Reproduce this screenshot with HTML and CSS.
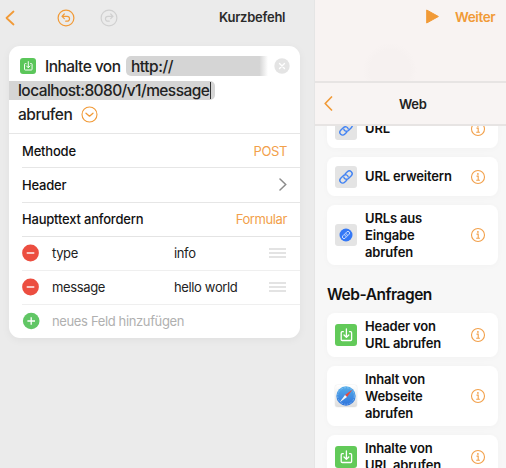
FILE: index.html
```html
<!DOCTYPE html>
<html lang="de">
<head>
<meta charset="utf-8">
<title>Kurzbefehl</title>
<link rel="stylesheet" href="styles.css">
</head>
<body>
<svg class="defs" width="0" height="0" aria-hidden="true">
  <defs>
    <symbol id="download" viewBox="0 0 22 22">
      <path d="M8.300 7.700H7.200a1 1 0 0 0-1 1v6.800a1 1 0 0 0 1 1h8.400a1 1 0 0 0 1-1V8.700a1 1 0 0 0-1-1h-1.100M11.400 5v8M9 11l2.400 2.400 2.400-2.400" fill="none" stroke="currentColor" stroke-width="1.300" stroke-linecap="round" stroke-linejoin="round"/>
    </symbol>
    <symbol id="link" viewBox="0 0 22 22">
      <g transform="rotate(-45 11 11)" fill="none" stroke="currentColor" stroke-width="1.400" stroke-linecap="round">
        <path d="M9.200 13.800H6.300a2.800 2.800 0 0 1 0-5.600h4a2.800 2.800 0 0 1 2.300 4.300"/>
        <path d="M12.800 8.200h2.900a2.800 2.800 0 0 1 0 5.600h-4a2.800 2.800 0 0 1-2.300-4.300"/>
      </g>
    </symbol>
    <symbol id="info" viewBox="0 0 16 16">
      <circle cx="8" cy="8" r="6.500" fill="none" stroke="currentColor" stroke-width="1.100"/>
      <circle cx="7.900" cy="4.900" r=".9" fill="currentColor"/>
      <path d="M6.500 7.100h1.700v4M6.200 11.300h3.700" fill="none" stroke="currentColor" stroke-width="1.100"/>
    </symbol>
    <symbol id="undo" viewBox="0 0 18 18">
      <circle cx="9" cy="9" r="7.900" fill="none" stroke="currentColor" stroke-width="1.200"/>
      <path d="M7.300 5L5 7.300l2.300 2.300M5.200 7.300h4.900a2.400 2.400 0 0 1 0 4.900H8.700" fill="none" stroke="currentColor" stroke-width="1.200" stroke-linecap="round" stroke-linejoin="round"/>
    </symbol>
    <symbol id="grip" viewBox="0 0 17 10">
      <path d="M0 1h17M0 5h17M0 9h17" stroke="currentColor" stroke-width="1.200"/>
    </symbol>
  </defs>
</svg>
<div class="app">
  <main class="editor">
    <header class="toolbar">
      <svg class="back" width="10" height="16" viewBox="0 0 10 16"><path d="M8.500 1.500L1.500 8l7 6.500" fill="none" stroke="currentColor" stroke-width="1.800" stroke-linecap="round" stroke-linejoin="round"/></svg>
      <svg class="undo" width="18" height="18"><use href="#undo"/></svg>
      <svg class="redo" width="18" height="18"><use href="#undo"/></svg>
      <h1>Kurzbefehl</h1>
    </header>
    <section class="action">
      <div class="sentence">
        <div class="line first">
          <svg class="mini" width="16" height="16"><use href="#download"/></svg>
          <span class="verb">Inhalte von</span>
          <span class="chip-start"><span>http://</span></span>
          <svg class="clear" width="16" height="16" viewBox="0 0 16 16"><circle cx="8" cy="8" r="7.700" fill="#e4e4e4"/><path d="M5.500 5.500l5 5M10.500 5.500l-5 5" stroke="#fff" stroke-width="1.400" stroke-linecap="round"/></svg>
        </div>
        <div class="line second"><span class="chip-end"><span class="host">localhost:8080/v1/message</span><i></i></span></div>
        <div class="line third"><span class="fetch">abrufen</span>
          <svg width="17" height="17" viewBox="0 0 17 17"><circle cx="8.500" cy="8.500" r="7.500" fill="none" stroke="currentColor" stroke-width="1.100"/><path d="M5 7.200l3.500 3 3.500-3" fill="none" stroke="currentColor" stroke-width="1.300" stroke-linecap="round" stroke-linejoin="round"/></svg>
        </div>
      </div>
      <div class="row"><span>Methode</span><em>POST</em></div>
      <div class="row"><span>Header</span><svg class="next" width="8" height="13" viewBox="0 0 8 13"><path d="M1 1l5.700 5.500L1 12" fill="none" stroke="currentColor" stroke-width="1.500" stroke-linecap="round"/></svg></div>
      <div class="row"><span>Haupttext anfordern</span><em>Formular</em></div>
      <div class="field">
        <svg width="18" height="18" viewBox="0 0 18 18"><circle cx="8.500" cy="9" r="8.400" fill="#ec4e40"/><path d="M4.700 9h7.600" stroke="#fff" stroke-width="1.400"/></svg>
        <span class="key">type</span><span class="value">info</span><svg class="grip" width="17" height="10"><use href="#grip"/></svg>
      </div>
      <div class="field">
        <svg width="18" height="18" viewBox="0 0 18 18"><circle cx="8.500" cy="9" r="8.400" fill="#ec4e40"/><path d="M4.700 9h7.600" stroke="#fff" stroke-width="1.400"/></svg>
        <span class="key">message</span><span class="value">hello world</span><svg class="grip" width="17" height="10"><use href="#grip"/></svg>
      </div>
      <div class="field add">
        <svg width="18" height="18" viewBox="0 0 18 18"><circle cx="9.200" cy="9" r="8.300" fill="#61c665"/><path d="M5.400 9H13M9.200 5.200v7.600" stroke="#fff" stroke-width="1.300"/></svg>
        <span class="new">neues Feld hinzufügen</span>
      </div>
    </section>
  </main>
  <aside class="library">
    <header class="top">
      <svg width="13" height="15" viewBox="0 0 13 15"><path d="M.7 1v13L12.400 7.500z" fill="currentColor" stroke="currentColor" stroke-linejoin="round"/></svg>
      <span class="weiter">Weiter</span>
    </header>
    <nav class="crumb">
      <svg width="9" height="15" viewBox="0 0 9 15"><path d="M7.500 1L1.200 7.500l6.300 6.500" fill="none" stroke="currentColor" stroke-width="1.700" stroke-linecap="round" stroke-linejoin="round"/></svg>
      <h2>Web</h2>
    </nav>
    <div class="list">
      <div class="items">
        <article><svg class="icon gray"><use href="#link"/></svg><p>URL</p><svg class="info"><use href="#info"/></svg></article>
        <article><svg class="icon gray"><use href="#link"/></svg><p>URL erweitern</p><svg class="info"><use href="#info"/></svg></article>
        <article class="triple"><svg class="icon gray" viewBox="0 0 22 22"><circle cx="11" cy="11" r="6.500" fill="#3478f6"/><use href="#link" x="4.500" y="4.500" width="13" height="13" color="#dce9ff"/></svg><p>URLs aus<br>Eingabe<br>abrufen</p><svg class="info"><use href="#info"/></svg></article>
        <h3>Web-Anfragen</h3>
        <article class="double"><svg class="icon green"><use href="#download"/></svg><p>Header von<br>URL abrufen</p><svg class="info"><use href="#info"/></svg></article>
        <article class="triple"><svg class="icon safari" viewBox="0 0 22 22">
          <defs><linearGradient id="sky" x2="0" y2="1"><stop stop-color="#55aeea"/><stop offset="1" stop-color="#2f73dc"/></linearGradient></defs>
          <circle cx="11" cy="11" r="9.700" fill="url(#sky)"/><circle cx="11" cy="11" r="8.300" fill="none" stroke="#c6e5fa" stroke-width="1" stroke-dasharray=".4 1.200"/>
          <path d="M17.500 4.500L12 12l-2-2z" fill="#e94b3d"/><path d="M4.500 17.500L10 10l2 2z" fill="#f3f5f7"/></svg><p>Inhalt von<br>Webseite<br>abrufen</p><svg class="info"><use href="#info"/></svg></article>
        <article class="double"><svg class="icon green"><use href="#download"/></svg><p>Inhalte von<br>URL abrufen</p><svg class="info"><use href="#info"/></svg></article>
      </div>
    </div>
  </aside>
</div>
</body>
</html>
```
FILE: styles.css
```css
* { box-sizing: border-box; }
body {
  margin: 0;
  width: 506px;
  height: 468px;
  overflow: hidden;
  font-family: Inter, "Liberation Sans", sans-serif;
  color: #222;
}
h1, h2, h3, p { margin: 0; }
em { font-style: normal; color: #f2a04a; }
svg { display: block; flex: none; }
span { white-space: nowrap; }
.defs { position: absolute; }
.app { display: flex; height: 468px; }

.editor { width: 314px; background: #ebebeb; }
.toolbar { display: flex; align-items: center; height: 46px; padding: 0 0 11px 5px; color: #f19a37; }
.undo { margin-left: 42px; }
.redo { margin-left: 25px; color: #d0d0d0; transform: scaleX(-1); }
.toolbar h1 { margin: -2px 0 0 101px; font-size: 13px; line-height: 18px; font-weight: 600; color: #2b2b2b; letter-spacing: -.25px; }

.action { width: 291px; height: 292px; margin-left: 9px; background: #fff; border-radius: 11px; box-shadow: 0 2px 8px rgba(0, 0, 0, .05); }
.sentence { height: 87px; padding-top: 10px; font-size: 15.500px; font-weight: 500; }
.line { display: flex; align-items: center; height: 24px; }
.line.first { height: 20px; padding-left: 11px; }
.mini { border-radius: 3px; background: #5bc65a; color: #fff; }
.verb { width: 75px; margin-left: 9px; letter-spacing: -.55px; }
.chip-start { display: flex; align-items: center; width: 142px; height: 20px; margin-left: 6px; padding-left: 5px; border-radius: 5px 0 0 5px; background: linear-gradient(90deg, #d5d5d5 94%, #fff); letter-spacing: -.45px; }
.clear { margin-left: 6px; }
.line.second { margin-top: 2px; }
.chip-end { display: flex; align-items: center; height: 19px; width: 206px; padding-left: 9px; border-radius: 0 5px 5px 0; background: #d5d5d5; letter-spacing: -.57px; }
.host { width: 192px; }
.chip-end i { width: 1px; height: 17px; background: #333; }
.line.third { padding-left: 9px; color: #f19a37; }
.fetch { width: 63px; color: #222; letter-spacing: -.48px; }

.row { display: flex; align-items: center; justify-content: space-between; height: 34.300px; padding-right: 13px; margin-left: 13px; border-top: 1px solid #e6e6e6; font-size: 13px; font-weight: 500; color: #111; letter-spacing: -.2px; }
.row:nth-child(2) { margin-left: 0; padding-left: 13px; }
.row em { font-weight: 400; letter-spacing: -.4px; }
.next { color: #8c8c8c; }
.field { display: flex; align-items: center; height: 34px; padding-right: 14px; margin-left: 13px; border-top: 1px solid #efefef; font-size: 13px; letter-spacing: -.36px; }
.field:nth-child(5) { border-color: #e4e4e4; }
.key { width: 122px; margin-left: 12px; }
.value { flex: 1; }
.grip { color: #c7c7c7; }
.new { margin-left: 12px; color: #b0b0b0; }

.library { display: flex; flex-direction: column; width: 192px; border-left: 1px solid #e5e5e5; background: #f7f7f7; overflow: hidden; }
.top { display: flex; align-items: flex-start; height: 81px; padding: 9px 0 0 111px; background: radial-gradient(circle at 75px 70px, #f6f1f0 0, #f6f1f0 20px, #f8f3f2 27px); color: #f19a37; flex: none; }
.weiter { margin-left: 16px; font-size: 13.500px; line-height: 16px; font-weight: 600; letter-spacing: -.38px; }
.crumb { display: flex; align-items: center; height: 45px; padding-left: 9px; border-top: 2px solid #e7e4e3; border-bottom: 2px solid #e7e4e3; background: #f8f4f3; color: #f19a37; flex: none; }
.crumb h2 { margin-left: 66px; font-size: 13px; font-weight: 600; color: #222; letter-spacing: -.3px; }
.list { flex: 1; overflow: hidden; }
.items { margin: -17px 8px 0 12px; }
article { display: flex; align-items: center; height: 39px; margin-bottom: 9px; padding: 0 12px 0 8px; background: #fff; border-radius: 8px; box-shadow: 0 1px 7px rgba(0, 0, 0, .025); }
article.double { height: 44px; }
article.triple { height: 60px; }
.icon { width: 22px; height: 22px; border-radius: 3px; }
.gray { background: #e4e4e4; color: #4484f3; }
.green { background: #62ca59; color: #fff; }
.safari { background: linear-gradient(#fff, #ddd); box-shadow: 0 0 1px #bbb; }
article p { flex: 1; margin-left: 8px; font-size: 13px; line-height: 17px; font-weight: 600; color: #111; white-space: nowrap; letter-spacing: -.16px; }
.info { width: 16px; height: 16px; color: #f2a04a; }
h3 { height: 39px; padding-top: 11px; font-size: 15.500px; line-height: 20px; font-weight: 600; color: #111; letter-spacing: -.48px; }
```
